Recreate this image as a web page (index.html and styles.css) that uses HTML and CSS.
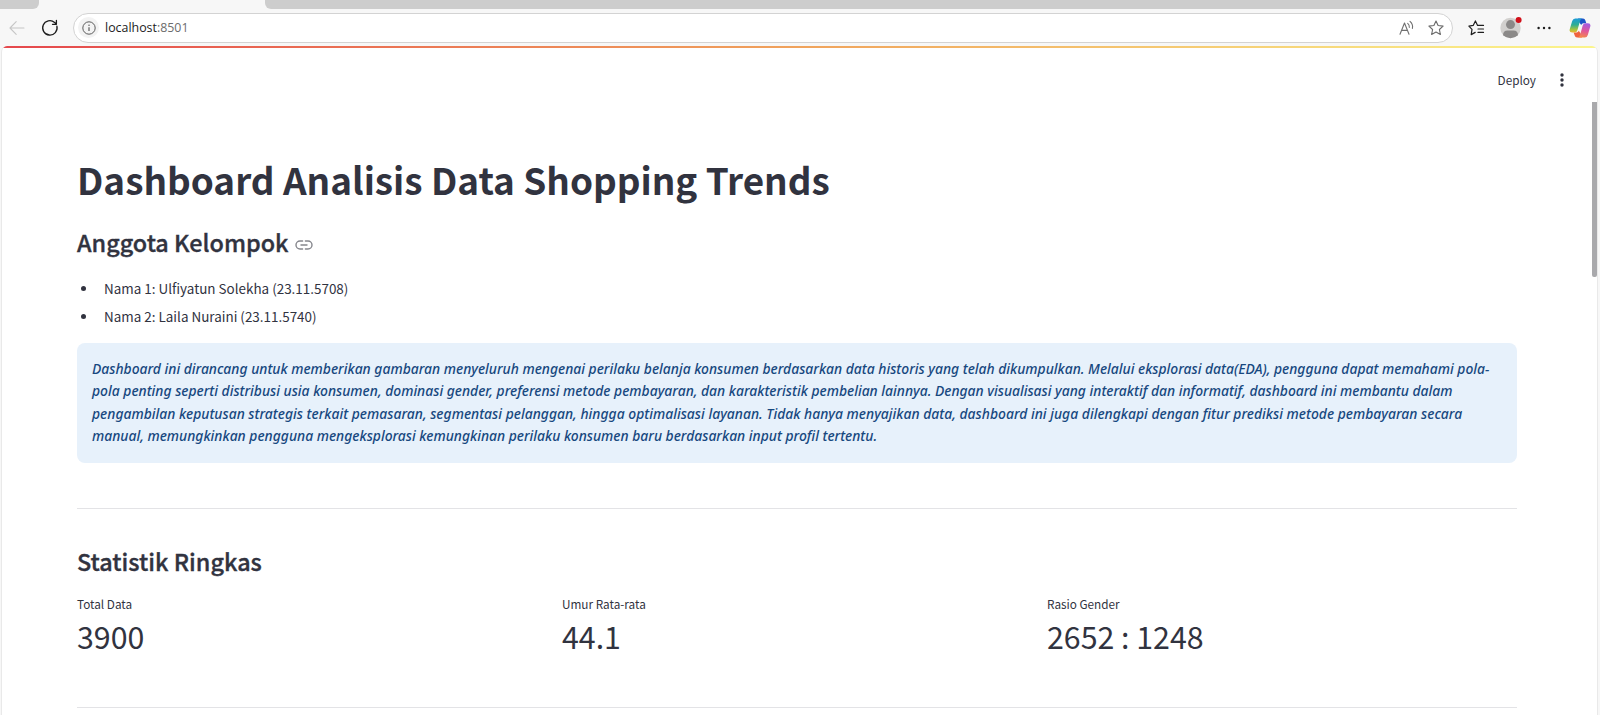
FILE: index.html
```html
<!DOCTYPE html>
<html lang="id">
<head>
<meta charset="utf-8">
<title>Dashboard Analisis Data Shopping Trends</title>
<link rel="stylesheet" href="styles.css">
</head>
<body>
<div class="browser">
  <div class="tabs"><div class="tab tab-left"></div><div class="tab-active"></div><div class="tab tab-right"></div></div>
  <div class="toolbar">
    <svg class="back" width="16" height="16" viewBox="0 0 16 16" fill="none" stroke="#c6c6c6" stroke-width="1.1" stroke-linecap="round" stroke-linejoin="round"><path d="M15 8H1M7.2 1.6 1 8l6.2 6.4"/></svg>
    <svg class="reload" width="18" height="18" viewBox="0 0 18 18" fill="none" stroke="#1c1c1c" stroke-width="1.3" stroke-linecap="round" stroke-linejoin="round"><path d="M15.9 7.2A7.2 7.2 0 1 1 13.6 3.4L15.2 5M15.4 1.5V5.3H11.5"/></svg>
    <div class="address">
      <span class="info-badge"><svg width="14" height="14" viewBox="0 0 14 14" fill="none" stroke="#5b5b5b" stroke-width="1"><circle cx="7" cy="7" r="6.2"/><path d="M7 6.2V10" stroke-width="1.2"/><circle cx="7" cy="4.2" r=".75" fill="#5b5b5b" stroke="none"/></svg></span>
      <span class="url">localhost<span class="port">:8501</span></span>
      <svg class="read" width="16" height="16" viewBox="0 0 16 16" fill="none" stroke="#707070" stroke-width="1.1" stroke-linecap="round" stroke-linejoin="round"><path d="M1 14.2 5.5 3 10 14.2M2.5 10.4H8.5M8.7 3.3Q10.6 4.9 10.3 7.4M11 1.4Q14.3 4.2 13.4 8.4"/></svg>
      <svg class="star" width="16" height="16" viewBox="0 0 16 16" fill="none" stroke="#6a6a6a" stroke-width="1.1" stroke-linejoin="round"><path d="M8 1 10.1 5.5 15.1 6.1 11.4 9.5 12.4 14.5 8 12.1 3.6 14.5 4.6 9.5.9 6.1 5.9 5.5Z"/></svg>
    </div>
    <svg class="favs" width="17" height="16" viewBox="0 0 17 16" fill="none" stroke="#1e1e1e" stroke-width="1.2" stroke-linecap="round" stroke-linejoin="round"><path d="M10.2 5.4H9.6L7.4.9 5.2 5.4.9 6.1 4 9.3 3.2 14.6 7.2 12.4M10.2 5.4H15.5M10 9H15.5M10 12.4H15.5"/></svg>
    <svg class="avatar" width="22" height="22" viewBox="0 0 22 22"><defs><clipPath id="round"><circle cx="10.5" cy="11" r="10.2"/></clipPath></defs><circle cx="10.5" cy="11" r="10.2" fill="#d2d0ce"/><g clip-path="url(#round)" fill="#8b8988"><circle cx="10.5" cy="7.6" r="4.5"/><path d="M3 22V18.5Q3 13.6 7.5 13.6H13.5Q18 13.6 18 18.5V22Z"/></g><circle cx="18.6" cy="3" r="3" fill="#d1101a"/></svg>
    <svg class="more" width="14" height="4" viewBox="0 0 14 4" fill="#1b1b1b"><circle cx="1.6" cy="2" r="1.2"/><circle cx="7" cy="2" r="1.2"/><circle cx="12.4" cy="2" r="1.2"/></svg>
    <svg class="copilot" width="22" height="20" viewBox="0 0 22 20">
      <defs>
        <linearGradient id="cl" x1="0" y1="0" x2="0" y2="1"><stop offset="0" stop-color="#1b9bd8"/><stop offset=".45" stop-color="#2fae94"/><stop offset=".8" stop-color="#a9c43c"/><stop offset="1" stop-color="#f0b32e"/></linearGradient>
        <linearGradient id="cr" x1=".5" y1="0" x2=".3" y2="1"><stop offset="0" stop-color="#a45be0"/><stop offset=".5" stop-color="#e0569c"/><stop offset="1" stop-color="#f58a4a"/></linearGradient>
      </defs>
      <path d="M9 .5H14Q15.8.5 16.4 2.4L17.3 5.2H14.5Q12.8 5.2 12.2 7L10 4Z" fill="#1c55c8"/>
      <path d="M13 19.5H8Q6.3 19.5 5.7 17.6L4.6 14.5H7.6Q9.2 14.5 9.8 12.7L12 16Z" fill="#f0623e"/>
      <path d="M6.2.5H13.3Q11.7.8 11.1 2.8L8.4 12.3Q7.8 14.5 5.6 14.5H3.2Q-.2 14.5.8 11L3.2 3Q4 .5 6.2.5Z" fill="url(#cl)"/>
      <path d="M15.8 19.5H8.8Q10.4 19.2 11 17.2L13.7 7.4Q14.3 5.2 16.5 5.2H18.9Q22.2 5.2 21.2 8.8L18.8 17Q18 19.5 15.8 19.5Z" fill="url(#cr)"/>
    </svg>
  </div>
  <div class="page">
    <div class="decoration"></div>
    <header class="app-header">
      <span class="deploy">Deploy</span>
      <svg width="4" height="14" viewBox="0 0 4 14" fill="#31333f"><circle cx="2" cy="2" r="1.7"/><circle cx="2" cy="7" r="1.7"/><circle cx="2" cy="12" r="1.7"/></svg>
    </header>
    <div class="scrollbar"></div>
    <main class="content">
      <h1>Dashboard Analisis Data Shopping Trends</h1>
      <h2 class="members">Anggota Kelompok <svg width="18" height="10" viewBox="0 0 18 10" fill="none" stroke="#85868c" stroke-width="1.4" stroke-linecap="round"><path d="M7.6 1H5A4 4 0 0 0 5 9H7.6M10.4 1H13A4 4 0 0 1 13 9H10.4M6 5H12"/></svg></h2>
      <ul>
        <li>Nama 1: Ulfiyatun Solekha (23.11.5708)</li>
        <li>Nama 2: Laila Nuraini (23.11.5740)</li>
      </ul>
      <p class="notice">Dashboard ini dirancang untuk memberikan gambaran menyeluruh mengenai perilaku belanja konsumen berdasarkan data historis yang telah dikumpulkan. Melalui eksplorasi data(EDA), pengguna dapat memahami pola-<br>pola penting seperti distribusi usia konsumen, dominasi gender, preferensi metode pembayaran, dan karakteristik pembelian lainnya. Dengan visualisasi yang interaktif dan informatif, dashboard ini membantu dalam<br><span class="wide">pengambilan keputusan strategis terkait pemasaran, segmentasi pelanggan, hingga optimalisasi layanan. Tidak hanya menyajikan data, dashboard ini juga dilengkapi dengan fitur prediksi metode pembayaran secara</span><br>manual, memungkinkan pengguna mengeksplorasi kemungkinan perilaku konsumen baru berdasarkan input profil tertentu.</p>
      <hr>
      <h2 class="stats-title">Statistik Ringkas</h2>
      <div class="metrics">
        <div class="metric"><div class="label">Total Data</div><div class="value">3900</div></div>
        <div class="metric"><div class="label">Umur Rata-rata</div><div class="value">44.1</div></div>
        <div class="metric"><div class="label">Rasio Gender</div><div class="value">2652 : 1248</div></div>
      </div>
      <hr class="last">
    </main>
  </div>
</div>
</body>
</html>
```
FILE: styles.css
```css
* { box-sizing: border-box; }
body { margin: 0; background: #f7f7f7; color: #31333f; font-family: "Noto Sans CJK SC", "Open Sans", sans-serif; }
svg { display: block; flex: none; }
.browser { height: 715px; overflow: hidden; display: flex; flex-direction: column; }

.tabs { display: flex; height: 9px; flex: none; }
.tab { background: #cdcdcd; }
.tab-left { width: 39px; border-bottom-right-radius: 6px; }
.tab-active { width: 226px; }
.tab-right { flex: 1; border-bottom-left-radius: 6px; }

.toolbar { display: flex; align-items: center; height: 37px; flex: none; padding: 0 9px; }
.reload { margin-left: 16px; }
.address { display: flex; align-items: center; width: 1382px; height: 30px; margin-left: 14px; padding: 0 8px 0 4px; border: 1px solid #d3d3d3; border-radius: 15px; background: #fff; }
.info-badge { display: flex; align-items: center; justify-content: center; width: 21px; height: 21px; margin-right: 6px; border-radius: 50%; background: #f3f3f3; }
.url { flex: 1; color: #1c1c1c; font: 12.4px/20px "Open Sans", sans-serif; }
.port { color: #6c6c6c; }
.star { margin-left: 13px; }
.favs { margin-left: 15px; }
.avatar { margin-left: 15px; }
.more { margin-left: 15px; }
.copilot { margin-left: 18px; }

.page { position: relative; flex: 1; min-height: 0; width: 1597px; margin-left: 1px; overflow: hidden; background: #fff; border: solid #e9e9e9; border-width: 0 1px; border-radius: 6px 6px 0 0; }
.decoration { height: 2px; background: linear-gradient(90deg, #e5484d, #f0a35c 50%, #fbf58d); }
.app-header { display: flex; align-items: center; justify-content: flex-end; gap: 24px; height: 64px; padding-right: 33px; }
.deploy { font-size: 11.75px; line-height: 20px; }
.scrollbar { position: absolute; top: 56px; right: 0; width: 5px; height: 175px; background: #a9a9ac; border-radius: 0 0 2px 2px; }

.content { width: 1440px; margin-left: 75px; padding-top: 42px; }
h1, h2, ul, p { margin: 0; }
h1 { font-size: 36.9px; font-weight: 700; line-height: 50px; white-space: nowrap; }
h2 { display: flex; align-items: center; gap: 6px; font-size: 23.4px; font-weight: 500; line-height: 32px; -webkit-text-stroke: .35px #31333f; }
.members { margin-top: 22px; }
.members svg { margin-top: 5px; }
ul { margin-top: 16px; padding: 0; list-style: none; }
li { display: flex; align-items: center; height: 27.7px; font-size: 13.45px; line-height: 22px; }
li::before { content: ""; width: 5px; height: 5px; margin: 2px 18px 0 4px; border-radius: 50%; background: #31333f; }
.notice { height: 120px; margin-top: 13.6px; padding: 15px; border-radius: 8px; background: #e7f1fb; color: #17487f; font: italic 500 13.87px/22.5px "Noto Sans", sans-serif; white-space: nowrap; }
.wide { letter-spacing: .012px; }
hr { height: 1px; margin: 45px 0 0; border: 0; background: #e3e3e6; }
.stats-title { margin-top: 36px; }
.metrics { display: grid; grid-template-columns: repeat(3, 1fr); gap: 15px; margin-top: 17px; }
.label { font-size: 11.75px; line-height: 20px; }
.value { font-size: 30.3px; line-height: 44px; }
.last { margin-top: 49px; }
```
